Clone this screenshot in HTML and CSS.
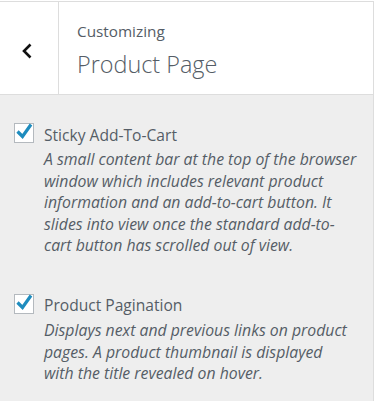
FILE: index.html
```html
<!DOCTYPE html>
<html>
<head>
<meta charset="utf-8">
<link rel="stylesheet" href="styles.css">
</head>
<body>
<div class="panel">
  <div class="header">
    <div class="back">
      <svg width="12" height="16" viewBox="0 0 12 16"><path d="M9.5 1.5 L3 8 L9.5 14.5" fill="none" stroke="#111" stroke-width="2.6"/></svg>
    </div>
    <div class="title">
      <div class="sub">Customizing</div>
      <div class="main">Product Page</div>
    </div>
  </div>
  <div class="controls">
    <div class="control">
      <div class="row">
        <span class="box"><svg class="check" width="20" height="20" viewBox="0 0 20 20"><path d="M3.5 8.5 L8.5 13.5 L17 1.5" fill="none" stroke="#1e8cbe" stroke-width="3.2"/></svg></span>
        <span class="label">Sticky Add-To-Cart</span>
      </div>
      <p class="desc">A small content bar at the top of the browser<br>window which includes relevant product<br>information and an add-to-cart button. It<br>slides into view once the standard add-to-<br>cart button has scrolled out of view.</p>
    </div>
    <div class="control">
      <div class="row">
        <span class="box"><svg class="check" width="20" height="20" viewBox="0 0 20 20"><path d="M3.5 8.5 L8.5 13.5 L17 1.5" fill="none" stroke="#1e8cbe" stroke-width="3.2"/></svg></span>
        <span class="label">Product Pagination</span>
      </div>
      <p class="desc">Displays next and previous links on product<br>pages. A product thumbnail is displayed<br>with the title revealed on hover.</p>
    </div>
  </div>
</div>
</body>
</html>
```
FILE: styles.css
```css
html, body { margin: 0; padding: 0; background: #fff; }
body { font-family: "Open Sans", "Noto Sans", sans-serif; color: #555d66; }
.panel {
  width: 374px;
  height: 400px;
  margin-top: 1px;
  background: #eee;
  border-right: 1px solid #ddd;
  border-top: 1px solid #ddd;
  box-sizing: border-box;
}
.header {
  display: flex;
  height: 93px;
  box-sizing: border-box;
  background: #fff;
  border-bottom: 1px solid #ddd;
}
.back {
  width: 59px;
  flex: none;
  border-right: 1px solid #ddd;
  box-sizing: border-box;
  display: flex;
  align-items: center;
  justify-content: center;
  padding: 5px 4px 0 0;
}
.title { padding: 19px 0 0 18px; }
.sub { font-size: 15.3px; line-height: 20px; }
.main { font-size: 23.4px; font-weight: 300; line-height: 30px; margin-top: 8px; }
.controls { padding: 28px 0 0 14px; }
.control { margin-bottom: 37px; }
.row { display: flex; align-items: center; gap: 10px; height: 20px; }
.box {
  position: relative;
  width: 20px; height: 20px;
  flex: none;
  box-sizing: border-box;
  border: 1px solid #b4b9be;
  background: #fff;
}
.check { position: absolute; left: -1px; top: -1px; overflow: visible; }
.label { font-size: 15.6px; line-height: 20px; padding-top: 3px; }
.desc {
  margin: 6px 0 0 30px;
  font-size: 15.8px;
  font-style: italic;
  line-height: 21.6px;
  white-space: nowrap;
}
```
